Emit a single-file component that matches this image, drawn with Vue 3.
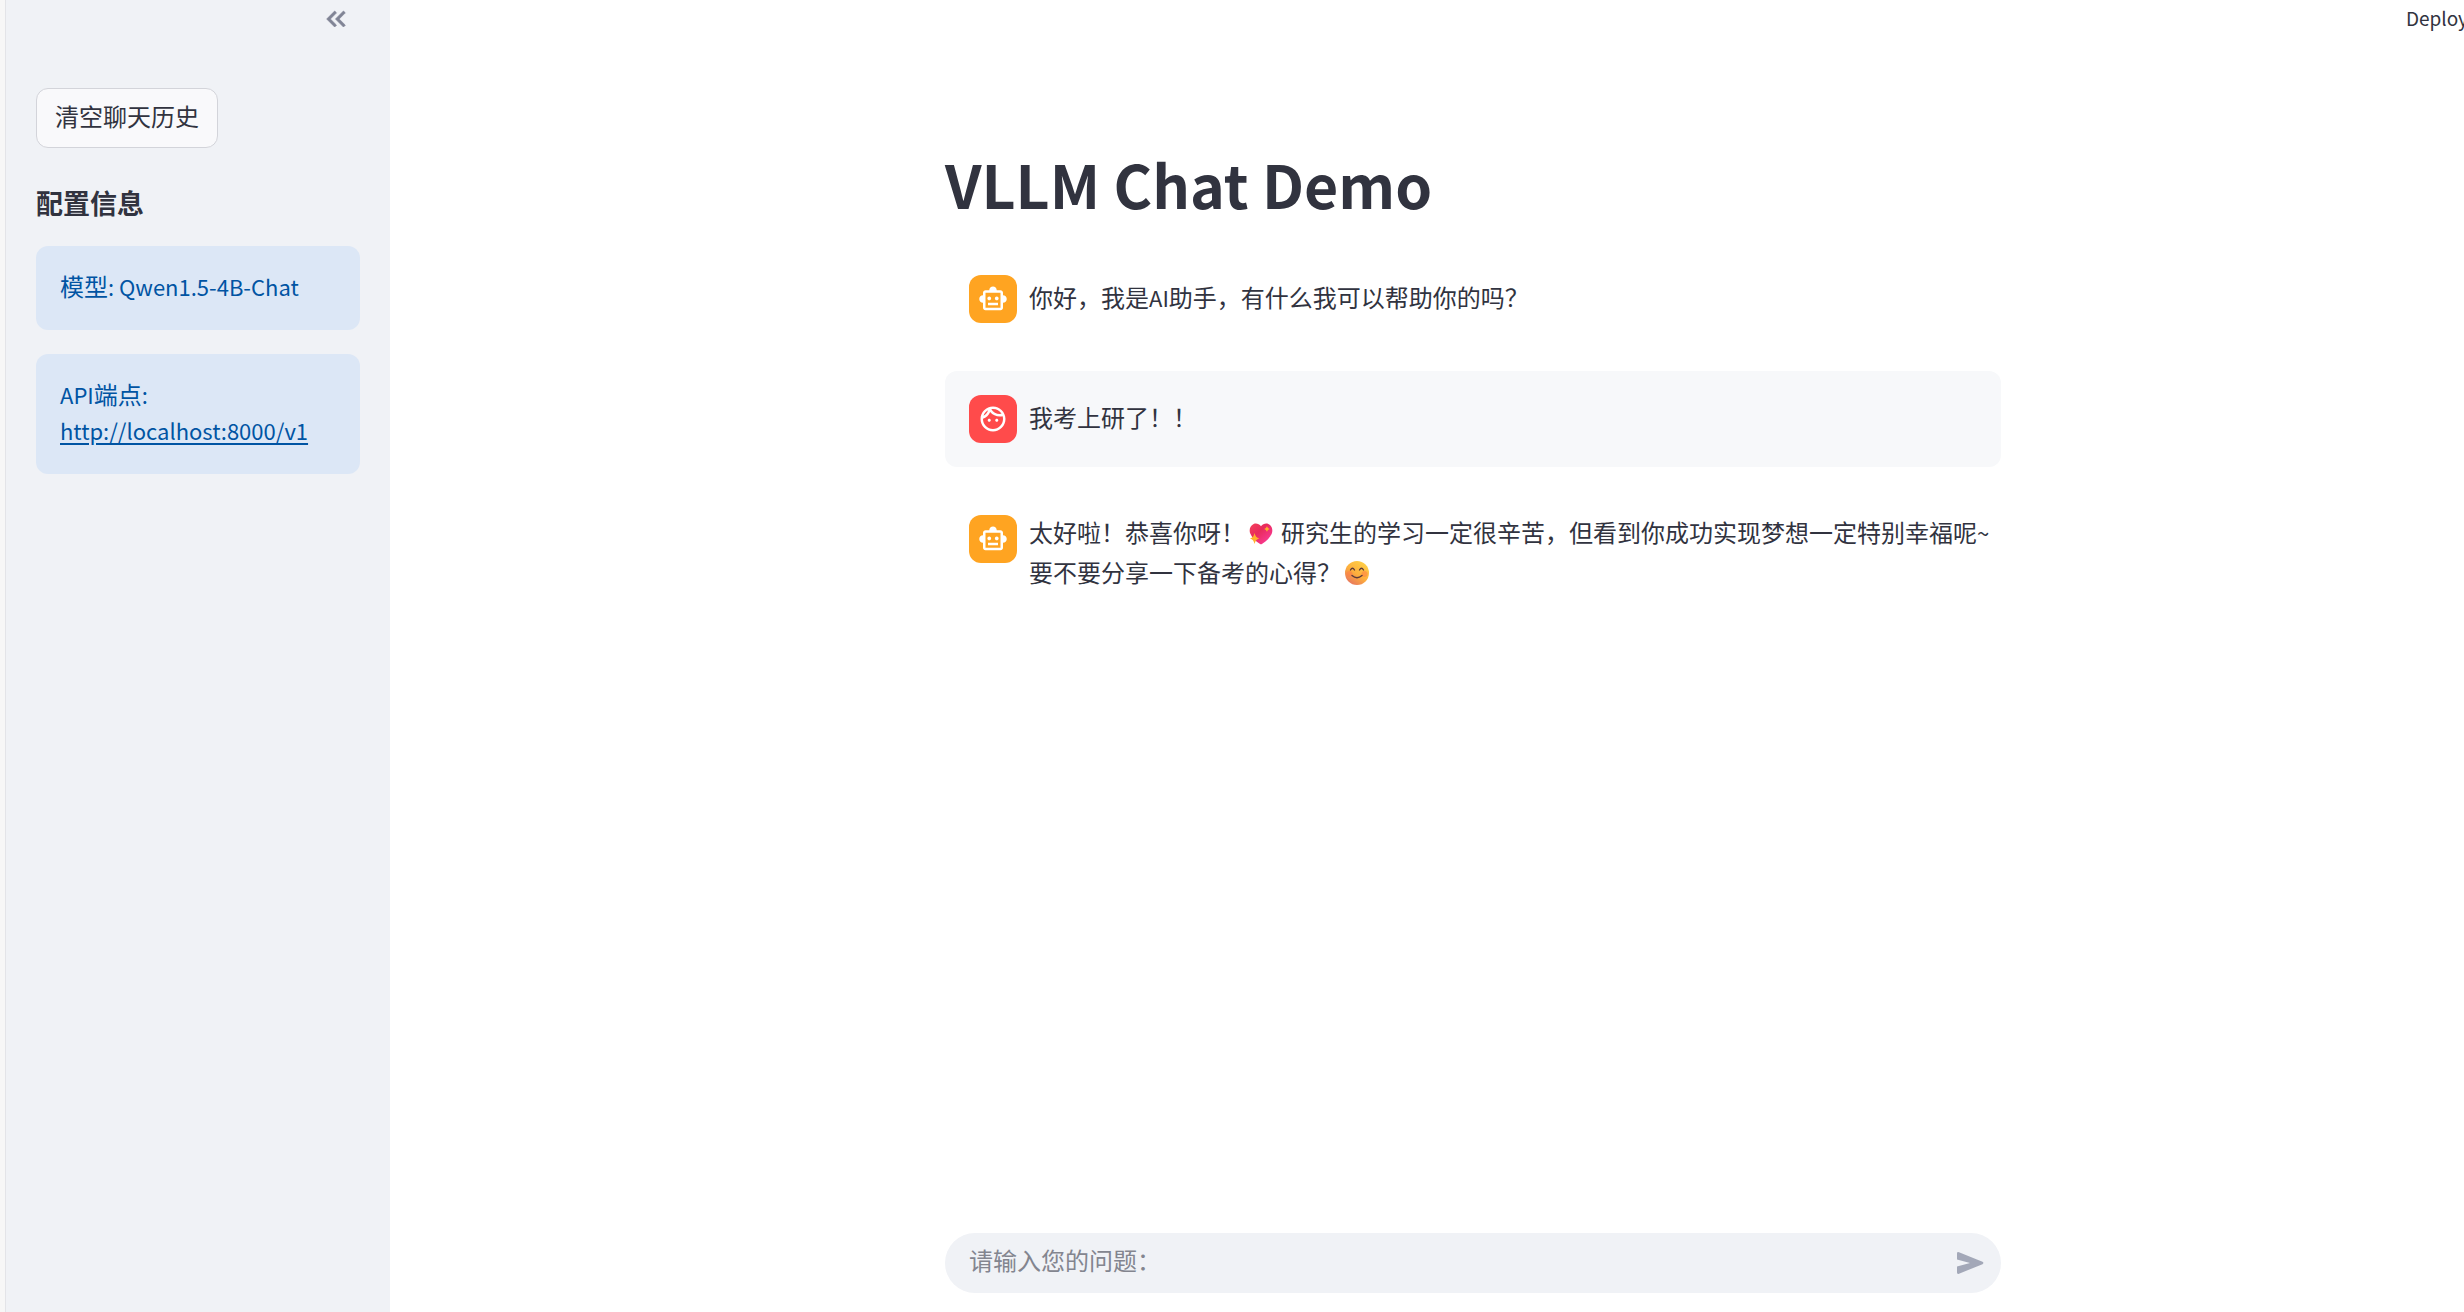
<script setup>
import { ref } from 'vue'

const question = ref('')
const messages = [
  { role: 'assistant', parts: [{ text: '你好，我是' }, { latin: 'AI' }, { text: '助手，有什么我可以帮助你的吗？' }] },
  { role: 'user', parts: [{ text: '我考上研了！！' }] },
  {
    role: 'assistant',
    parts: [
      { text: '太好啦！恭喜你呀！' },
      { icon: 'heart' },
      { text: '研究生的学习一定很辛苦，但看到你成功实现梦想一定特别幸福呢' },
      { latin: '~' },
      { br: true },
      { text: '要不要分享一下备考的心得？' },
      { icon: 'smile' },
    ],
  },
]
</script>

<template>
  <div class="viewport">
    <div class="app">
      <aside class="sidebar">
        <header class="sidebar-head">
          <button class="collapse" type="button" aria-label="收起侧边栏">
            <svg width="32" height="32" viewBox="0 0 24 24" aria-hidden="true">
              <path d="M17.6 18 19 16.6 14.4 12 19 7.4 17.6 6l-6 6zM11 18l1.4-1.4L7.800 12l4.600-4.600L11 6l-6 6z" />
            </svg>
          </button>
        </header>
        <button class="clear" type="button">清空聊天历史</button>
        <h2 class="config-title">配置信息</h2>
        <p class="info">模型<span class="latin">: Qwen1.5-4B-Chat</span></p>
        <p class="info">
          <span class="latin">API</span>端点<span class="latin">:</span><br />
          <a class="latin" href="http://localhost:8000/v1">http://localhost:8000/v1</a>
        </p>
      </aside>

      <main class="main">
        <header class="toolbar"><button class="deploy" type="button">Deploy</button></header>
        <div class="column">
          <h1 class="title">VLLM Chat Demo</h1>
          <section class="messages">
            <article v-for="(m, i) in messages" :key="i" class="message" :class="m.role">
              <div class="avatar">
                <svg v-if="m.role === 'assistant'" width="30" height="30" viewBox="0 0 24 24" aria-hidden="true">
                  <path d="M20 9V7c0-1.1-.9-2-2-2h-3c0-1.66-1.34-3-3-3S9 3.34 9 5H6c-1.1 0-2 .9-2 2v2c-1.66 0-3 1.34-3 3s1.34 3 3 3v4c0 1.1.9 2 2 2h12c1.1 0 2-.9 2-2v-4c1.66 0 3-1.34 3-3s-1.34-3-3-3zm-2 10H6V7h12v12zm-9-6c-.83 0-1.5-.67-1.5-1.5S8.17 10 9 10s1.5.67 1.5 1.5S9.83 13 9 13zm7.5-1.5c0 .83-.67 1.5-1.5 1.5s-1.5-.67-1.5-1.5.67-1.5 1.5-1.5 1.5.67 1.5 1.5zM8 15h8v2H8v-2z" />
                </svg>
                <svg v-else width="30" height="30" viewBox="0 0 24 24" aria-hidden="true">
                  <path d="M10.25 13c0 .69-.56 1.25-1.25 1.25S7.75 13.69 7.75 13s.56-1.25 1.25-1.25 1.25.56 1.25 1.25zM15 11.75c-.69 0-1.25.56-1.25 1.25s.56 1.25 1.25 1.25 1.25-.56 1.25-1.25-.56-1.25-1.25-1.25zm7 .25c0 5.52-4.48 10-10 10S2 17.52 2 12 6.48 2 12 2s10 4.48 10 10zM10.66 4.12C12.06 6.44 14.6 8 17.5 8c.46 0 .91-.05 1.34-.12C17.44 5.56 14.9 4 12 4c-.46 0-.91.05-1.34.12zM4.42 9.47c1.71-.97 3.03-2.55 3.66-4.44C6.37 6 5.05 7.58 4.42 9.47zM20 12c0-.78-.12-1.53-.33-2.24-.7.15-1.42.24-2.17.24-3.13 0-5.92-1.44-7.76-3.69C8.69 8.87 6.6 10.88 4 11.86c.01.04 0 .09 0 .14 0 4.42 3.58 8 8 8s8-3.58 8-8z" />
                </svg>
              </div>
              <p class="text">
                <template v-for="(p, j) in m.parts" :key="j">
                  <br v-if="p.br" />
                  <span v-else-if="p.latin" class="latin">{{ p.latin }}</span>
                  <svg v-else-if="p.icon === 'heart'" class="emoji heart" width="24" height="22" viewBox="0 0 26 24" role="img" aria-label="闪亮的心">
                    <defs>
                      <linearGradient id="heart-fill" x1="0" y1="0" x2="1" y2="1">
                        <stop offset="0" stop-color="#f5415c" />
                        <stop offset="0.4" stop-color="#e82b5c" />
                        <stop offset="1" stop-color="#ff3fa6" />
                      </linearGradient>
                    </defs>
                    <path fill="url(#heart-fill)" d="M13 3.500C11 1 8 0 5 1 1 3 0 7 1 11c2 5 6 9 11 12q1 .6 2 0c5-3 9-7 11-12 1-4 0-8-4-10-3-1-6 0-8 2.500z" />
                    <path fill="#ffb02e" d="M6 11q1 5 5 6-4 1-5 6-1-5-5-6 4-1 5-6zM19.500 3.500q.6 2.500 3 3-2.400.6-3 3-.6-2.400-3-3 2.400-.5 3-3z" />
                  </svg>
                  <svg v-else-if="p.icon === 'smile'" class="emoji smile" width="24" height="24" viewBox="0 0 24 24" role="img" aria-label="微笑">
                    <defs>
                      <linearGradient id="smile-fill" x1="1" y1="0" x2="0.3" y2="1">
                        <stop offset="0" stop-color="#ffd84a" />
                        <stop offset="0.6" stop-color="#fdaf3c" />
                        <stop offset="1" stop-color="#e8785d" />
                      </linearGradient>
                    </defs>
                    <circle cx="12" cy="12" r="12" fill="url(#smile-fill)" />
                    <circle cx="4.500" cy="13" r="3" fill="#ff7a45" opacity=".5" />
                    <circle cx="19.500" cy="13" r="3" fill="#ff7a45" opacity=".5" />
                    <path fill="none" stroke="#5c3a3a" stroke-width="1.400" stroke-linecap="round" d="M5.500 9q2-3.500 4 0M14.500 9q2-3.500 4 0M7 14.500q5 4.500 10 0" />
                  </svg>
                  <template v-else>{{ p.text }}</template>
                </template>
              </p>
            </article>
          </section>
          <form class="composer" @submit.prevent>
            <input v-model="question" type="text" aria-label="请输入您的问题" placeholder="请输入您的问题：" />
            <button class="send" type="submit" aria-label="发送">
              <svg width="30" height="30" viewBox="0 0 30 30" aria-hidden="true">
                <path d="M2 5.500Q2 3.600 4 4.300L27.500 13.800Q29.300 15 27.500 16.200L4 25.700Q2 26.400 2 24.500V18.500L15 15 2 11.500z" />
              </svg>
            </button>
          </form>
        </div>
      </main>
    </div>
  </div>
</template>

<style>
body {
  margin: 0;
  background: #fff;
}
</style>

<style scoped>
.viewport {
  overflow: hidden;
}
.app {
  display: flex;
  box-sizing: border-box;
  width: calc(100% + 92px);
  min-height: 100vh;
  border-left: 5px solid #f7f7f7;
  color: #31333f;
  font-family: "Noto Sans CJK SC", "Noto Sans", sans-serif;
  font-size: 24px;
  line-height: 36px;
}
button,
input {
  font: inherit;
  color: inherit;
  border: 0;
  padding: 0;
  margin: 0;
  background: none;
}
svg {
  display: block;
  fill: currentColor;
}
.latin {
  font-size: 22px;
}
.sidebar {
  box-sizing: border-box;
  flex: 0 0 385px;
  padding: 0 30px;
  background: #f0f2f6;
  border-left: 1px solid #e3e4e8;
}
.sidebar-head {
  display: flex;
  justify-content: flex-end;
  height: 88px;
}
.collapse {
  width: 32px;
  height: 32px;
  margin: 3px 8px 0 0;
  color: #808495;
}
.collapse path {
  stroke: currentColor;
  stroke-width: 0.5px;
}
.clear {
  box-sizing: border-box;
  display: block;
  height: 60px;
  padding: 0 18px 4px;
  border: 1px solid #d3d4da;
  border-radius: 12px;
  background: #f9f9fb;
}
.config-title {
  margin: 34px 0 22px;
  font-size: 27px;
  line-height: 42px;
  font-weight: 700;
}
.info {
  margin: 0 0 24px;
  padding: 22px 24px 26px;
  border-radius: 12px;
  background: #dce7f6;
  color: #0054a3;
}
.info a {
  color: inherit;
  text-decoration-thickness: 2px;
  text-underline-offset: 3px;
}
.main {
  flex: 1;
  min-width: 0;
  display: flex;
  flex-direction: column;
  background: #fff;
}
.toolbar {
  display: flex;
  justify-content: flex-end;
  height: 36px;
  padding-right: 88px;
}
.deploy {
  padding-bottom: 2px;
  font-size: 19px;
}
.column {
  flex: 1;
  display: flex;
  flex-direction: column;
  box-sizing: border-box;
  width: 100%;
  max-width: 1056px;
  margin: 0 auto;
}
.title {
  margin: 108px 0 28px;
  font-size: 59px;
  line-height: 79px;
  font-weight: 700;
}
.messages {
  display: flex;
  flex-direction: column;
  gap: 24px;
}
.message {
  display: flex;
  gap: 12px;
  padding: 24px 0 24px 24px;
  border-radius: 12px;
}
.user {
  background: #f7f8fa;
}
.avatar {
  flex: none;
  display: grid;
  place-items: center;
  width: 48px;
  height: 48px;
  border-radius: 12px;
  background: #ffa421;
  color: #fff;
}
.user .avatar {
  background: #ff4b4b;
}
.text {
  align-self: center;
  margin: -3px 0 2px;
  line-height: 39px;
}
.emoji {
  display: inline-block;
  vertical-align: -3px;
}
.heart {
  margin: 0 8px 0 4px;
}
.smile {
  margin-left: 4px;
}
.composer {
  display: flex;
  align-items: center;
  height: 60px;
  margin: auto 0 19px;
  padding: 0 16px 0 24px;
  border-radius: 30px;
  background: #f0f2f6;
}
.composer input {
  flex: 1;
  min-width: 0;
  padding-bottom: 6px;
  outline: 0;
}
.composer input::placeholder {
  color: #83858f;
  opacity: 1;
}
.send {
  color: #a3a8b8;
}
</style>
